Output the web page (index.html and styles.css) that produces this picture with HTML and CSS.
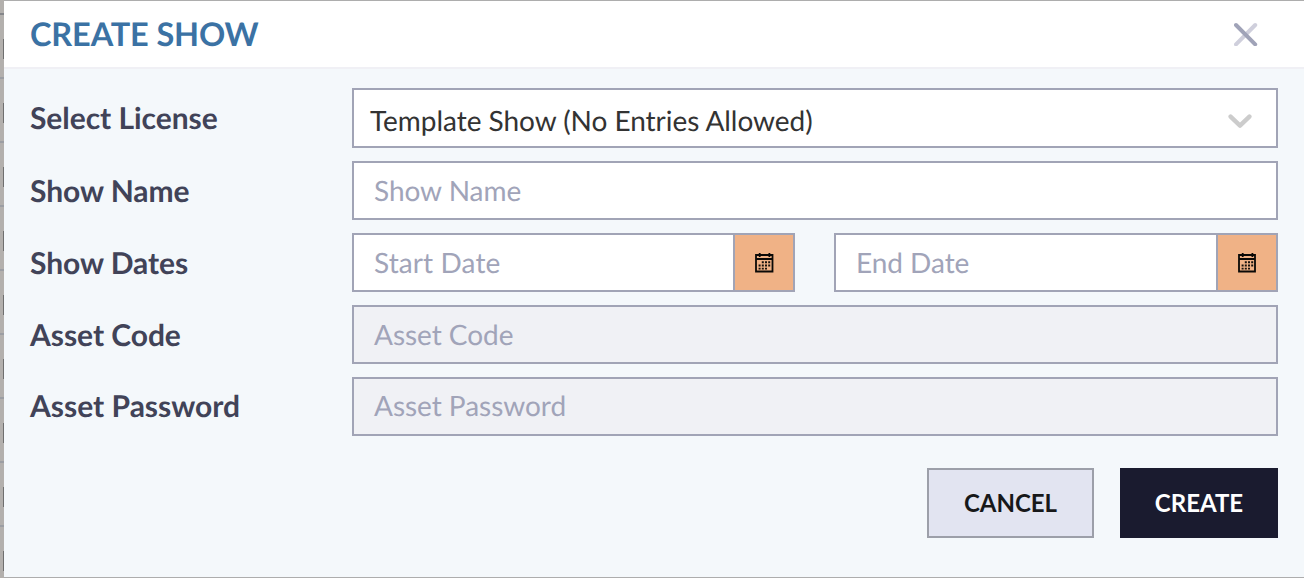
FILE: index.html
```html
<!DOCTYPE html>
<html lang="en">
<head>
<meta charset="utf-8">
<title>Create Show</title>
<link rel="stylesheet" href="styles.css">
</head>
<body>
<div class="backdrop"></div>
<main class="modal">
  <header class="modal-header">
    <h1 class="title">CREATE SHOW</h1>
    <svg class="close" width="24" height="24" viewBox="0 0 24 24" fill="none" stroke-width="4" stroke-linecap="round"><path d="M2 22.3 21.2 3" stroke="#cfcfdc"/><path d="M2 3 21.2 22.3" stroke="#a0a3b8"/></svg>
  </header>
  <form class="form">
    <label class="label">Select License</label>
    <div class="field select"><span class="value">Template Show (No Entries Allowed)</span>
      <svg class="chevron" width="24" height="14" viewBox="0 0 24 14" fill="none" stroke="#ccc" stroke-width="4.4" stroke-linecap="round" stroke-linejoin="round"><path d="M2.6 2.6 12 11.6 21.4 2.6"/></svg>
    </div>
    <label class="label">Show Name</label>
    <div class="field"><span class="hint">Show Name</span></div>
    <label class="label">Show Dates</label>
    <div class="dates">
      <div class="field date"><span class="hint start">Start Date</span><span class="picker"><svg width="20" height="20" viewBox="0 0 20 20"><path class="frame" d="M2 2h16.5v16.5h-16.5zM2 6h16"/><path class="rings" d="M5.7 0v4M15.4 0v4"/><path class="dots" d="M7.8 9.3h8.6M4.6 12.5h11.8M4.6 15.6h8.4"/></svg></span></div>
      <div class="field date"><span class="hint">End Date</span><span class="picker"><svg width="20" height="20" viewBox="0 0 20 20"><path class="frame" d="M2 2h16v16.5h-16zM2 6h16"/><path class="rings" d="M5.7 0v4M15.4 0v4"/><path class="dots" d="M7.8 9.3h8.6M4.6 12.5h11.8M4.6 15.6h8.4"/></svg></span></div>
    </div>
    <label class="label">Asset Code</label>
    <div class="field disabled"><span class="hint">Asset Code</span></div>
    <label class="label last">Asset Password</label>
    <div class="field disabled"><span class="hint last">Asset Password</span></div>
  </form>
  <footer class="actions">
    <button class="btn cancel" type="button">CANCEL</button>
    <button class="btn create" type="button">CREATE</button>
  </footer>
</main>
</body>
</html>
```
FILE: styles.css
```css
* { box-sizing: border-box; }
body {
  margin: 0;
  height: 578px;
  display: flex;
  overflow: hidden;
  background: #adadad;
  font-family: Lato, "Liberation Sans", sans-serif;
  text-rendering: geometricPrecision;
}
.backdrop {
  width: 4px;
  height: 578px;
  background:
    linear-gradient(#85868a, #85868a) 0 13px / 4px 2px no-repeat,
    repeating-linear-gradient(transparent 0 13px, #9c9ea3 13px 15px, transparent 15px 64px),
    repeating-linear-gradient(transparent 0 39px, #6f6f6f 39px 59px, transparent 59px 64px) 3px 0 / 1px 100% no-repeat,
    #b3b0ad;
}
.modal {
  flex: 1;
  height: 576px;
  margin-top: 1px;
  background: #f4f8fb;
}
.modal-header {
  height: 68px;
  padding: 0 46px 0 26px;
  display: flex;
  align-items: center;
  justify-content: space-between;
  background: #fff;
  border-bottom: 2px solid #f0f0f5;
}
.title {
  margin: 0;
  font-size: 32.5px;
  letter-spacing: -0.15px;
  line-height: 40px;
  font-weight: 700;
  color: #3b72a4;
}
.close { display: block; }
.form {
  display: grid;
  grid-template-columns: 322px 926px;
  grid-template-rows: 60px repeat(4, 59px);
  row-gap: 13px;
  padding: 19px 26px 0;
}
.label {
  align-self: center;
  font-size: 30px;
  letter-spacing: -0.05px;
  line-height: 36px;
  font-weight: 700;
  color: #414358;
}
.label.last { padding-bottom: 2px; letter-spacing: 0; }
.field {
  display: flex;
  align-items: center;
  justify-content: space-between;
  padding-left: 20px;
  background: #fff;
  border: 2px solid #a1a4b6;
  font-size: 28px;
  line-height: 34px;
  white-space: nowrap;
}
.select { padding: 6px 24px 0 16px; color: #333; }
.value, .hint { padding-bottom: 2px; letter-spacing: -0.04px; }
.hint { color: #a1a4b9; }
.hint.start { letter-spacing: 0.1px; }
.hint.last { padding-bottom: 4px; }
.disabled { background: #f0f1f5; }
.dates {
  display: grid;
  grid-template-columns: 443px 444px;
  column-gap: 39px;
}
.picker {
  width: 60px;
  height: 100%;
  display: flex;
  align-items: center;
  justify-content: center;
  background: #f0b286;
  border-left: 2px solid #a1a4b6;
}
.frame { fill: none; stroke: #0b0907; stroke-width: 1.8; }
.rings { fill: none; stroke: #0b0907; stroke-width: 1.8; }
.dots { fill: none; stroke: #15100c; stroke-width: 1.9; stroke-dasharray: 2 1.2; }
.actions {
  display: flex;
  justify-content: flex-end;
  gap: 26px;
  padding: 32px 26px 0;
}
.btn {
  height: 70px;
  padding: 0;
  border: 0;
  font: 700 24px/30px Lato, "Liberation Sans", sans-serif;
}
.cancel { width: 167px; color: #17181a; background: #e2e4f1; border: 2px solid #9c9fa9; }
.create { width: 158px; color: #fff; background: #1a1b2f; }
```
